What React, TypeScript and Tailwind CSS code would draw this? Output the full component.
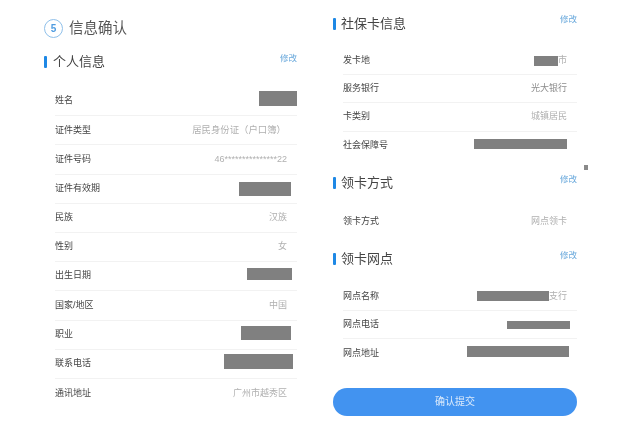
import type { ReactNode } from "react";

type RowProps = {
  label: string;
  value?: ReactNode;
  last?: boolean;
  tall?: boolean;
};

function Redacted({ className }: { className: string }) {
  return <span className={`block shrink-0 bg-[#808080] ${className}`} />;
}

function Row({ label, value, last, tall }: RowProps) {
  return (
    <div
      className={`flex items-center justify-between ${tall ? "h-[29.2px]" : "h-[28.2px]"} ${
        last ? "" : "border-b border-[#f2f2f2]"
      }`}
    >
      <span className="text-[9px] text-[#444444]">{label}</span>
      <span className="flex items-center text-[9px] text-[#b0b0b0]">{value}</span>
    </div>
  );
}

function SectionHead({
  title,
  className,
  linkClass,
  gapClass,
}: {
  title: string;
  className: string;
  linkClass: string;
  gapClass: string;
}) {
  return (
    <div className={`flex items-start justify-between ${className}`}>
      <h2 className={`flex items-center text-[13px] leading-[18px] text-[#444444] ${gapClass}`}>
        <span className="h-[12px] w-[3px] rounded-[1px] bg-[#1e88e5]" />
        {title}
      </h2>
      <button type="button" className={`text-[8.5px] leading-[12px] text-[#6aa9dc] ${linkClass}`}>
        修改
      </button>
    </div>
  );
}

export default function App() {
  return (
    <div
      className="relative grid h-[437px] w-[644px] grid-cols-[322px_322px] overflow-hidden bg-white blur-[0.3px]"
      style={{ fontFamily: '"Liberation Sans", "Noto Sans CJK SC", sans-serif' }}
    >
      <section className="pl-[44px] pr-[25px] pt-[18px]">
        <div className="flex items-center gap-[6px]">
          <span className="grid h-[19px] w-[19px] place-items-center rounded-full border border-[#8fc0ea] text-[10px] font-bold text-[#4f9ce0]">
            5
          </span>
          <h1 className="text-[14.5px] leading-[20px] text-[#555555]">信息确认</h1>
        </div>
        <SectionHead title="个人信息" className="mt-[15px]" linkClass="-mt-[1px]" gapClass="gap-[6px]" />
        <div className="mt-[16px] pl-[11px]">
          <Row tall label="姓名" value={<Redacted className="mb-[6px] h-[15px] w-[38px]" />} />
          <Row tall label="证件类型" value={<span className="mr-[11px] text-[9.4px]">居民身份证（户口簿）</span>} />
          <Row tall label="证件号码" value={<span className="mr-[10px]">46***************22</span>} />
          <Row tall label="证件有效期" value={<Redacted className="mr-[6px] h-[14px] w-[52px]" />} />
          <Row tall label="民族" value={<span className="mr-[10px]">汉族</span>} />
          <Row tall label="性别" value={<span className="mr-[10px]">女</span>} />
          <Row tall label="出生日期" value={<Redacted className="mb-[4px] mr-[5px] h-[12px] w-[45px]" />} />
          <Row tall label="国家/地区" value={<span className="mr-[10px]">中国</span>} />
          <Row tall label="职业" value={<Redacted className="mb-[4px] mr-[6px] h-[14px] w-[50px]" />} />
          <Row tall label="联系电话" value={<Redacted className="mb-[4px] mr-[4px] h-[15px] w-[69px]" />} />
          <Row tall last label="通讯地址" value={<span className="mr-[10px]">广州市越秀区</span>} />
        </div>
      </section>

      <section className="pl-[11px] pr-[67px] pt-[15px]">
        <SectionHead title="社保卡信息" className="" linkClass="-mt-[2px]" gapClass="gap-[5px]" />
        <div className="mt-[14px] pl-[10px]">
          <Row
            label="发卡地"
            value={
              <span className="mr-[10px] flex items-center">
                <Redacted className="h-[10px] w-[24px]" />市
              </span>
            }
          />
          <Row label="服务银行" value={<span className="mr-[10px] text-[#8c8c8c]">光大银行</span>} />
          <Row label="卡类别" value={<span className="mr-[10px]">城镇居民</span>} />
          <Row last label="社会保障号" value={<Redacted className="mb-[4px] mr-[10px] h-[10px] w-[93px]" />} />
        </div>
        <SectionHead title="领卡方式" className="mt-[14px]" linkClass="-mt-[1px]" gapClass="gap-[5px]" />
        <div className="mt-[16px] pl-[10px]">
          <Row last label="领卡方式" value={<span className="mr-[10px]">网点领卡</span>} />
        </div>
        <SectionHead title="领卡网点" className="mt-[14px]" linkClass="-mt-[1px]" gapClass="gap-[5px]" />
        <div className="mt-[15px] pl-[10px]">
          <Row
            label="网点名称"
            value={
              <span className="mr-[10px] flex items-center">
                <Redacted className="mb-[2px] h-[10px] w-[72px]" />支行
              </span>
            }
          />
          <Row label="网点电话" value={<Redacted className="mr-[7px] h-[8px] w-[63px]" />} />
          <Row last label="网点地址" value={<Redacted className="mb-[3px] mr-[8px] h-[11px] w-[102px]" />} />
        </div>
        <button
          type="button"
          className="mt-[20px] h-[28px] w-full rounded-full bg-[#4293f0] text-[10px] text-[#d9e9fb]"
        >
          确认提交
        </button>
      </section>

      <span className="absolute left-[584px] top-[165px] h-[5px] w-[4px] bg-[#8a8a8a]" />
    </div>
  );
}
